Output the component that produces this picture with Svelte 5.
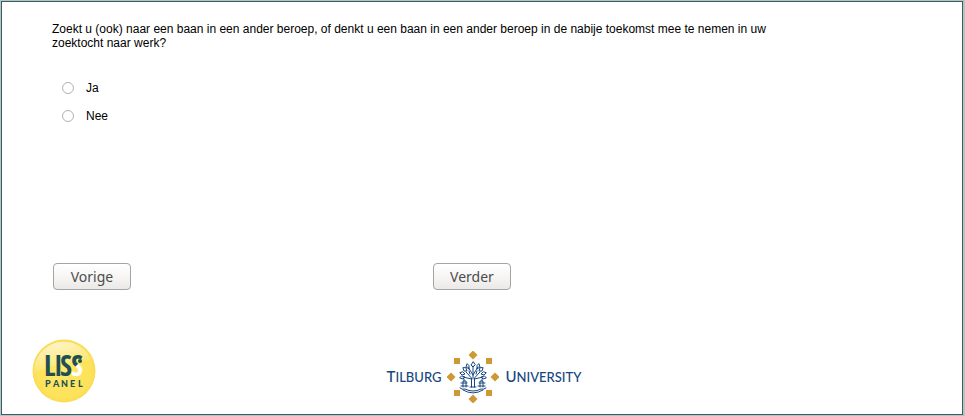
<script>
  let answer = $state('');
  const options = [
    { value: 'ja', label: 'Ja' },
    { value: 'nee', label: 'Nee' }
  ];
  const diamonds = [[26, 4], [4, 26], [48, 26], [26, 48]];
  const squares = [[10, 10], [42, 10], [10, 42], [42, 42]];
</script>

<main class="page">
  <form onsubmit={(e) => e.preventDefault()}>
    <fieldset>
      <legend>Zoekt u (ook) naar een baan in een ander beroep, of denkt u een baan in een ander beroep in de nabije toekomst mee te nemen in uw zoektocht naar werk?</legend>
      <div class="options">
        {#each options as option}
          <label>
            <input type="radio" name="answer" value={option.value} bind:group={answer} />
            {option.label}
          </label>
        {/each}
      </div>
    </fieldset>
    <div class="actions">
      <div class="slot"><button type="button">Vorige</button></div>
      <div class="slot"><button type="submit">Verder</button></div>
    </div>
  </form>

  <footer>
    <svg class="liss" width="64" height="64" viewBox="0 0 64 64" role="img" aria-label="LISS Panel">
      <defs>
        <radialGradient id="sun" cx="0.5" cy="0.5" r="0.5">
          <stop offset="0" stop-color="#ffe869" />
          <stop offset="0.85" stop-color="#fde25a" />
          <stop offset="1" stop-color="#f9dc55" />
        </radialGradient>
        <linearGradient id="shine" x1="0.15" y1="0" x2="0.5" y2="0.8">
          <stop offset="0" stop-color="#fff" stop-opacity="0.75" />
          <stop offset="1" stop-color="#fff" stop-opacity="0.1" />
        </linearGradient>
        <linearGradient id="split" gradientUnits="userSpaceOnUse" x1="43" y1="27" x2="44" y2="28">
          <stop offset="0" stop-color="#1d4f54" />
          <stop offset="1" stop-color="#fff" />
        </linearGradient>
      </defs>
      <circle cx="32" cy="32" r="31.5" fill="url(#sun)" />
      <path d="M2 34A30 30 0 0 1 60 22Q34 20 2 34Z" fill="url(#shine)" />
      <text class="liss-name" y="37"><tspan x="12">L</tspan><tspan x="22">I</tspan><tspan x="28">S</tspan></text>
      <text class="liss-name" x="39" y="37" fill="url(#split)">S</text>
      <circle cx="48" cy="22" r="2" fill="#1d4f54" />
      <text class="liss-panel" y="48"><tspan x="13">P</tspan><tspan x="21">A</tspan><tspan x="29">N</tspan><tspan x="38">E</tspan><tspan x="46">L</tspan></text>
    </svg>

    <div class="university">
      <span class="name"><span class="cap">T</span>ILBURG</span>
      <svg width="52" height="52" viewBox="0 0 52 52" aria-hidden="true">
        <g fill="#cc9933">
          {#each diamonds as [x, y]}
            <path d="M{x} {y - 4.5}l4.5 4.5l-4.5 4.5l-4.5-4.5z" />
          {/each}
          {#each squares as [x, y]}
            <rect x={x - 3} y={y - 3} width="6" height="6" />
          {/each}
        </g>
        <g fill="none" stroke="#174780" stroke-width="1" stroke-linecap="round" stroke-linejoin="round">
          <path d="M24.5 36V27L19 21M27.5 36V27L33 21M26 28V15M26 24L21 16M26 24L31 16M24.5 28L16 26M27.5 28L36 26M23 36h6" />
          <path d="M26 11l-2 3 2 2 2-2zM20 13l-1 3 3 2 0-3zM32 13l1 3-3 2 0-3zM16 17l1 3 3 0-1-3zM36 17l-1 3-3 0 1-3zM13 22l2 2 3-1-2-2zM39 22l-2 2-3-1 2-2zM13 27l3 1 2-2-3-1zM39 27l-3 1-2-2 3-1zM22 20l1 3M30 20l-1 3" />
          <path d="M16 36v-6h3v6M14 32h6M17 28v2M33 36v-6h3v6M32 32h6M35 28v2M14 35h7M31 35h7" />
          <path d="M13 37q3 2 5 1q8 4 16 0q2 1 5-1M16 39q10 6 20 0" />
        </g>
      </svg>
      <span class="name"><span class="cap">U</span>NIVERSITY</span>
    </div>
  </footer>
</main>

<style>
  :global(body) {
    background: #c0c0c0;
  }
  .page {
    box-sizing: border-box;
    min-height: 414px;
    margin: 1px 2px 1px 1px;
    border: 1px solid #2d6468;
    background: #fff;
    padding: 20px 30px 10px;
    font: 12px/14px "Liberation Sans", Arial, sans-serif;
    color: #000;
  }
  form {
    padding: 0 20px;
  }
  fieldset {
    margin: 0;
    padding: 0;
    border: 0;
    min-height: 241px;
  }
  legend {
    padding: 0;
    max-width: 720px;
  }
  .options {
    display: flex;
    flex-direction: column;
    gap: 14px;
    padding: 31px 0 0 10px;
  }
  label {
    display: flex;
    align-items: center;
    gap: 12px;
  }
  input {
    appearance: none;
    box-sizing: border-box;
    width: 12px;
    height: 12px;
    margin: 0;
    border: 1px solid #b0b0b0;
    border-radius: 50%;
    background: #fff;
  }
  input:checked {
    background: radial-gradient(#444 3px, #fff 4px);
  }
  .actions {
    display: flex;
    padding-left: 1px;
  }
  .slot {
    flex: 0 1 380px;
  }
  button {
    display: block;
    width: 78px;
    height: 27px;
    padding: 0;
    border: 1px solid #a6a4a2;
    border-radius: 4px;
    background: linear-gradient(#fff, #f7f6f5 50%, #ebe9e7);
    font: 14px/20px "Noto Sans", "Open Sans", sans-serif;
    color: #4c4c4c;
  }
  footer {
    display: grid;
    grid-template-columns: 1fr auto 1fr;
    align-items: center;
    padding-top: 49px;
  }
  svg {
    display: block;
  }
  .liss-name {
    font: 700 29px "Liberation Sans Narrow", "Open Sans Condensed", "DejaVu Sans Condensed", sans-serif;
  }
  .liss-name tspan,
  .liss-panel {
    fill: #1d4f54;
  }
  .liss-panel {
    font: 900 9px Lato, sans-serif;
  }
  .university {
    display: flex;
    align-items: center;
    gap: 6px;
    padding: 12px 0 0 4px;
  }
  .name {
    padding-bottom: 2px;
    font: 500 13px/18px Lato, sans-serif;
    color: #174780;
  }
  .cap {
    font-size: 15px;
  }
</style>
